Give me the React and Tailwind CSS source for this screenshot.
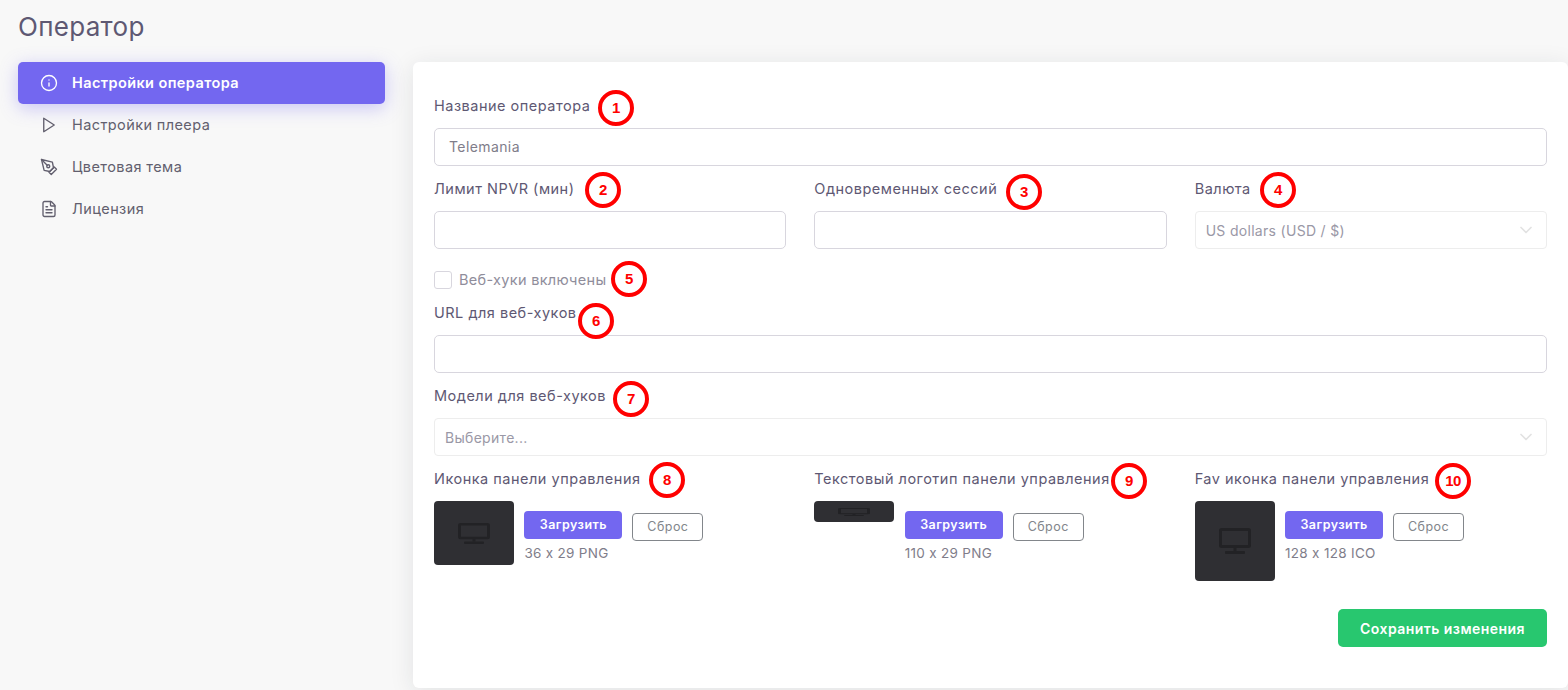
import { ChevronDown, FileText, Info } from 'lucide-react';

const menu = [
  { label: 'Настройки оператора', icon: 'info', active: true },
  { label: 'Настройки плеера', icon: 'play' },
  { label: 'Цветовая тема', icon: 'pen' },
  { label: 'Лицензия', icon: 'file' }
];

const uploads = [
  { label: 'Иконка панели управления', hint: '36 x 29 PNG', box: 'h-16', icon: 'h-[21px]' },
  { label: 'Текстовый логотип панели управления', hint: '110 x 29 PNG', box: 'h-[21px]', icon: 'h-[8px]' },
  { label: 'Fav иконка панели управления', hint: '128 x 128 ICO', box: 'h-20', icon: 'h-[26px]' }
];

// red numbered circles drawn over the screenshot
const marks = [
  { n: 1, pos: 'left-[185px] top-[28px]' },
  { n: 2, pos: 'left-[172px] top-[110px]' },
  { n: 3, pos: 'left-[593px] top-[112px]' },
  { n: 4, pos: 'left-[847px] top-[110px]' },
  { n: 5, pos: 'left-[198px] top-[199px]' },
  { n: 6, pos: 'left-[165px] top-[241px]' },
  { n: 7, pos: 'left-[200px] top-[319px]' },
  { n: 8, pos: 'left-[236px] top-[400px]' },
  { n: 9, pos: 'left-[698px] top-[401px]' },
  { n: 10, pos: 'left-[1022px] top-[401px]' }
];

function MenuIcon({ name }) {
  if (name === 'info') return <Info className="w-[18px] h-[18px]" strokeWidth={1.8} />;
  if (name === 'file') return <FileText className="w-[18px] h-[18px]" strokeWidth={1.8} />;
  if (name === 'play') {
    return (
      <svg viewBox="0 0 24 24" fill="none" stroke="currentColor" strokeWidth="1.8" strokeLinejoin="round" className="w-[18px] h-[18px]">
        <polygon points="5 3 19 12 5 21 5 3" />
      </svg>
    );
  }
  return (
    <svg viewBox="0 0 24 24" fill="none" stroke="currentColor" strokeWidth="1.8" strokeLinejoin="round" strokeLinecap="round" className="w-[18px] h-[18px]">
      <path d="M12 19l7-7 3 3-7 7-3-3z" />
      <path d="M18 13l-1.5-7.5L2 2l3.5 14.5L13 18l5-5z" />
      <path d="M2 2l7.586 7.586" />
      <circle cx="11" cy="11" r="2" />
    </svg>
  );
}

// placeholder picture, stretched to whatever box it sits in
function PlaceholderMonitor({ className }) {
  return (
    <svg viewBox="0 0 32 26" preserveAspectRatio="none" className={`w-8 ${className}`}>
      <rect x="1.5" y="1.5" width="29" height="17" rx="1" fill="none" stroke="#222225" strokeWidth="3" />
      <rect x="14.5" y="20" width="3" height="3" fill="#222225" />
      <rect x="6" y="23" width="20" height="3" rx="1" fill="#222225" />
    </svg>
  );
}

function Label({ children, className = '' }) {
  return <div className={`h-[22px] leading-[22px] text-[14.5px] tracking-[0.5px] text-[#5e5873] whitespace-nowrap ${className}`}>{children}</div>;
}

function TextInput({ value }) {
  return (
    <div className="h-[38px] pb-px rounded-[5px] border border-[#d8d6de] bg-white px-[14px] flex items-center text-[14px] tracking-[0.4px] text-[#7f7d8a]">
      {value}
    </div>
  );
}

function DisabledSelect({ value }) {
  return (
    <div className="h-[38px] rounded-[4px] border border-[#ededed] bg-white pl-[10px] pr-[10px] flex items-center justify-between text-[14px] tracking-[0.3px] text-[#9a98a6]">
      {value}
      <ChevronDown className="w-5 h-5 text-[#e2e2e2]" strokeWidth={2} />
    </div>
  );
}

function Upload({ item }) {
  return (
    <div>
      <Label>{item.label}</Label>
      <div className="flex mt-[11px] gap-[10.4px] items-start">
        <div className={`w-20 ${item.box} shrink-0 rounded-[4px] bg-[#2f2f33] flex items-center justify-center`}>
          <PlaceholderMonitor className={item.icon} />
        </div>
        <div className="pt-[10px]">
          <div className="flex items-start gap-[10px]">
            <button className="w-[98px] h-7 rounded-[4px] bg-[#7367f0] text-white text-[12.5px] font-semibold tracking-[0.45px]">Загрузить</button>
            <button className="w-[71px] h-7 mt-[2px] rounded-[4px] border border-[#82868b] bg-white text-[#82868b] text-[12.5px] tracking-[0.45px]">Сброс</button>
          </div>
          <div className="mt-[2px] text-[13.5px] leading-5 tracking-[0.3px] text-[#7f7d8a]">{item.hint}</div>
        </div>
      </div>
    </div>
  );
}

export default function App() {
  return (
    <div className="h-[690px] overflow-hidden bg-[#f8f8f8] font-['Inter','Noto_Sans',sans-serif]">
      <h1 className="h-[62px] pl-[18px] pt-[9px] text-[26px] leading-9 tracking-[0.3px] text-[#5e5873]">Оператор</h1>
      <div className="flex pl-[18px]">
        {/* Left menu */}
        <div className="w-[367px] shrink-0">
          {menu.map((item) => (
            <div
              key={item.label}
              className={`h-[42px] pl-[22px] flex items-center gap-[14px] rounded-[5px] text-[14.5px] tracking-[0.4px] ${
                item.active
                  ? 'bg-[#7367f0] text-white font-semibold shadow-[0_4px_18px_rgba(115,103,240,0.35)]'
                  : 'text-[#625f6e]'
              }`}
            >
              <MenuIcon name={item.icon} />
              {item.label}
            </div>
          ))}
        </div>

        {/* Main card */}
        <div className="relative ml-7 flex-1 h-[626px] rounded-[6px] bg-white px-[21px] pt-[33px] shadow-[0_4px_24px_0_rgba(34,41,47,0.1)]">
          <Label>Название оператора</Label>
          <div className="mt-[11px]"><TextInput value="Telemania" /></div>

          <div className="grid grid-cols-3 gap-x-7 mt-[12px]">
            <div>
              <Label>Лимит NPVR (мин)</Label>
              <div className="mt-[11px]"><TextInput /></div>
            </div>
            <div>
              <Label>Одновременных сессий</Label>
              <div className="mt-[11px]"><TextInput /></div>
            </div>
            <div>
              <Label>Валюта</Label>
              <div className="mt-[11px]"><DisabledSelect value="US dollars (USD / $)" /></div>
            </div>
          </div>

          <div className="flex items-center gap-[7px] mt-[22px] h-[18px]">
            <div className="w-[18px] h-[18px] rounded-[3px] border border-[#d8d6de] bg-white" />
            <span className="text-[14.5px] tracking-[0.3px] text-[#8f8d9b]">Веб-хуки включены</span>
          </div>

          <Label className="mt-[13px]">URL для веб-хуков</Label>
          <div className="mt-[11px]"><TextInput /></div>

          <Label className="mt-[12px]">Модели для веб-хуков</Label>
          <div className="mt-[11px]"><DisabledSelect value="Выберите..." /></div>

          <div className="grid grid-cols-3 gap-x-7 mt-[12px] h-[133px]">
            {uploads.map((item) => (
              <Upload key={item.label} item={item} />
            ))}
          </div>

          <div className="flex justify-end mt-[8px]">
            <button className="w-[209px] h-[38px] rounded-[5px] bg-[#28c76f] text-white text-[14px] font-semibold tracking-[0.45px]">
              Сохранить изменения
            </button>
          </div>

          {marks.map((m) => (
            <div
              key={m.n}
              className={`absolute ${m.pos} w-9 h-9 rounded-full border-4 border-[#ff0000] bg-white flex items-center justify-center font-['Liberation_Sans',sans-serif] font-bold text-[15px] tracking-[-0.5px] text-[#ff0000]`}
            >
              {m.n}
            </div>
          ))}
        </div>
      </div>
    </div>
  );
}
